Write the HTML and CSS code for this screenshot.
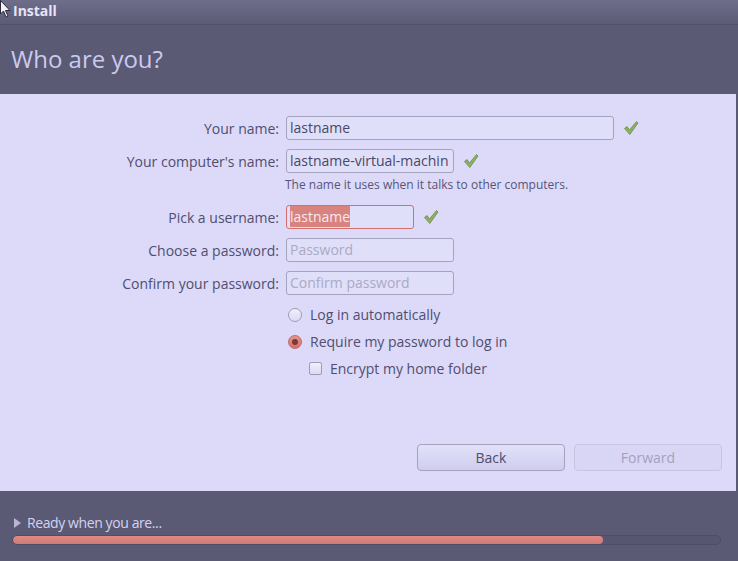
FILE: index.html
```html
<!DOCTYPE html>
<html>
<head>
<meta charset="utf-8">
<link rel="stylesheet" href="styles.css">
</head>
<body>
<div class="window">
  <div class="titlebar">
    <svg class="cursor" width="12" height="18" viewBox="0 0 12 18"><path d="M0.5 0.5 L0.5 14 L3.5 11 L6 17 L8 16 L5.5 10.5 L10 10.5 Z" fill="#f4f4f8" stroke="#2a2a3a" stroke-width="1"/></svg>
    <span class="app-title">Install</span>
  </div>
  <div class="header">
    <h1 class="page-title">Who are you?</h1>
  </div>
  <div class="content">
    <div class="form">
      <label class="label r1">Your name:</label>
      <div class="field r1">
        <div class="entry entry-wide">lastname</div>
        <svg class="check" width="16" height="16" viewBox="0 0 16 16"><path d="M1.5 8.5 L4 6.5 L6.5 10 L13.5 1.5 L15 3 L6.8 14.5 Z" fill="#8fb062" stroke="#6b8a45" stroke-width="0.8" stroke-linejoin="round"/></svg>
      </div>
      <label class="label r2">Your computer's name:</label>
      <div class="field r2">
        <div class="entry entry-mid">lastname-virtual-machin</div>
        <svg class="check" width="16" height="16" viewBox="0 0 16 16"><path d="M1.5 8.5 L4 6.5 L6.5 10 L13.5 1.5 L15 3 L6.8 14.5 Z" fill="#8fb062" stroke="#6b8a45" stroke-width="0.8" stroke-linejoin="round"/></svg>
      </div>
      <div class="hint r3">The name it uses when it talks to other computers.</div>
      <label class="label r4">Pick a username:</label>
      <div class="field r4">
        <div class="entry entry-short entry-focus"><span class="sel">lastname</span></div>
        <svg class="check" width="16" height="16" viewBox="0 0 16 16"><path d="M1.5 8.5 L4 6.5 L6.5 10 L13.5 1.5 L15 3 L6.8 14.5 Z" fill="#8fb062" stroke="#6b8a45" stroke-width="0.8" stroke-linejoin="round"/></svg>
      </div>
      <label class="label r5">Choose a password:</label>
      <div class="field r5">
        <div class="entry entry-mid placeholder">Password</div>
      </div>
      <label class="label r6">Confirm your password:</label>
      <div class="field r6">
        <div class="entry entry-mid placeholder">Confirm password</div>
      </div>
      <div class="options r7">
        <div class="option"><span class="radio"></span><span>Log in automatically</span></div>
        <div class="option"><span class="radio radio-on"></span><span>Require my password to log in</span></div>
        <div class="option option-sub"><span class="checkbox"></span><span>Encrypt my home folder</span></div>
      </div>
    </div>
    <div class="buttons">
      <button class="btn">Back</button>
      <button class="btn btn-disabled">Forward</button>
    </div>
  </div>
  <div class="footer">
    <div class="status"><span class="triangle"></span><span>Ready when you are...</span></div>
    <div class="progress"><div class="progress-fill" style="width: 590px"></div></div>
  </div>
</div>
</body>
</html>
```
FILE: styles.css
```css
* { box-sizing: border-box; }
html, body { margin: 0; padding: 0; }
body {
  width: 738px;
  height: 561px;
  overflow: hidden;
  background: #5a5a74;
  font-family: "Open Sans", "DejaVu Sans", sans-serif;
}
.window {
  width: 738px;
  height: 561px;
  display: flex;
  flex-direction: column;
  background: #5a5a74;
}
.titlebar {
  height: 25px;
  display: flex;
  align-items: center;
  padding-left: 0;
  background: linear-gradient(#6e6d8a, #5c5b77);
  border-bottom: 1px solid #525069;
  position: relative;
}
.cursor { position: absolute; left: 0; top: 0; }
.app-title {
  margin-left: 13px;
  color: #e6e4f6;
  font-weight: bold;
  font-size: 14px;
  margin-top: -3px;
}
.header {
  height: 69px;
  padding-left: 11px;
  display: flex;
  align-items: center;
}
.page-title {
  margin: 0;
  font-weight: normal;
  font-size: 24px;
  color: #cbc9f0;
  margin-top: -2px;
}
.content {
  height: 397px;
  margin-right: 2px;
  background: #dcdaf8;
  display: flex;
  flex-direction: column;
  justify-content: space-between;
  padding-top: 22px;
  padding-bottom: 20px;
}
.form {
  display: grid;
  grid-template-columns: 279px auto;
  column-gap: 7px;
  align-items: center;
}
.label {
  grid-column: 1;
  text-align: right;
  font-size: 14px;
  color: #504e70;
}
.field {
  grid-column: 2;
  display: flex;
  align-items: center;
  gap: 9px;
}
.r1 { grid-row: 1; }
.r2 { grid-row: 2; margin-top: 9px; }
.r3 { grid-row: 3; }
.r4 { grid-row: 4; margin-top: 12px; }
.r5 { grid-row: 5; margin-top: 9px; }
.r6 { grid-row: 6; margin-top: 9px; }
.r7 { grid-row: 7; }
.entry {
  height: 24px;
  border: 1px solid #a4a2bd;
  border-radius: 3px;
  background: #e0dff9;
  font-size: 14px;
  color: #4a4868;
  padding: 0 3px;
  line-height: 22px;
  white-space: nowrap;
  overflow: hidden;
}
.entry-wide { width: 328px; }
.entry-mid { width: 168px; }
.entry-short { width: 128px; }
.entry-focus { border-color: #d07070; }
.sel { background: #d8837e; color: #f4e8f4; padding: 1px 0; }
.placeholder { color: #aba9c4; }
.hint {
  grid-column: 2;
  font-size: 12px;
  color: #57557a;
  margin-left: -1px;
  margin-top: 3px;
}
.options {
  grid-column: 2;
  display: flex;
  flex-direction: column;
  gap: 8px;
  margin-top: 10px;
  font-size: 14px;
  color: #504e70;
}
.option {
  display: flex;
  align-items: center;
  gap: 8px;
  height: 19px;
  padding-left: 2px;
}
.option-sub { padding-left: 23px; }
.radio {
  width: 14px;
  height: 14px;
  border-radius: 50%;
  border: 1px solid #9d9bb6;
  background: linear-gradient(#f0effc, #dcdaf3);
  display: inline-flex;
  align-items: center;
  justify-content: center;
}
.radio-on {
  border-color: #c26a66;
  background: linear-gradient(#e8928d, #d5716c);
}
.radio-on::after {
  content: "";
  width: 6px;
  height: 6px;
  border-radius: 50%;
  background: #7a3a38;
}
.checkbox {
  width: 13px;
  height: 13px;
  border: 1px solid #9d9bb6;
  border-radius: 2px;
  background: linear-gradient(#f0effc, #dcdaf3);
}
.buttons {
  display: flex;
  justify-content: flex-end;
  gap: 9px;
  padding-right: 14px;
}
.btn {
  width: 148px;
  height: 27px;
  border: 1px solid #a4a2bd;
  border-radius: 4px;
  background: linear-gradient(#e2e1f9, #cfcdee);
  font-family: inherit;
  font-size: 14px;
  color: #4e4c6e;
  padding: 0;
}
.btn-disabled {
  border-color: #c6c4e0;
  background: #d8d6f4;
  color: #a3a1bf;
}
.footer {
  flex: 1;
  padding: 22px 17px 0 12px;
  display: flex;
  flex-direction: column;
}
.status {
  display: flex;
  align-items: center;
  gap: 6px;
  padding-left: 2px;
  font-size: 14px;
  color: #d4d2f2;
  letter-spacing: -0.4px;
}
.triangle {
  width: 0;
  height: 0;
  border-left: 7px solid #b8b6d8;
  border-top: 5px solid transparent;
  border-bottom: 5px solid transparent;
}
.progress {
  margin-top: 3px;
  height: 10px;
  border-radius: 5px;
  background: #57556f;
  border: 1px solid #4f4d67;
  overflow: hidden;
}
.progress-fill {
  height: 100%;
  border-radius: 4px;
  background: linear-gradient(#e08a86, #d07a76);
}
```
